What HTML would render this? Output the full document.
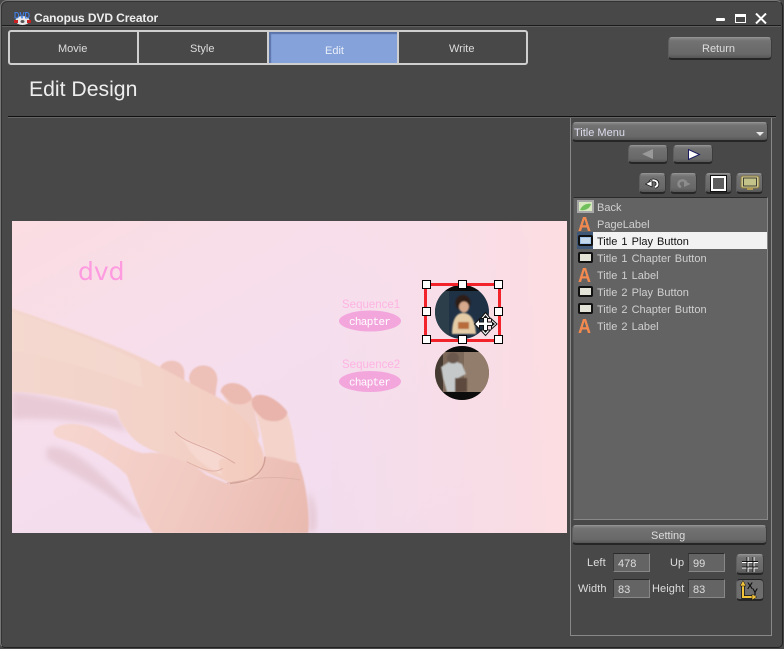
<!DOCTYPE html>
<html><head><meta charset="utf-8"><style>
html,body{margin:0;padding:0;background:#111}
#w{position:relative;width:784px;height:649px;overflow:hidden;background:#484848;font-family:"Liberation Sans",sans-serif;color:#ddd;font-size:11px}
.a{position:absolute}
.t{position:absolute;white-space:nowrap}
.btn{position:absolute;box-sizing:border-box;border-radius:4px;background:linear-gradient(#868686,#727272 15%,#686868 80%,#565656);border-top:1px solid #929292;border-bottom:2px solid #262626;border-left:1px solid #5e5e5e;border-right:1px solid #3c3c3c}
.row{position:absolute;left:597px;white-space:nowrap;font-size:11px;color:#d0d0d0;word-spacing:1px}
.inp{position:absolute;box-sizing:border-box;width:37px;height:19px;background:#646464;border-top:1px solid #2a2a2a;border-left:1px solid #3a3a3a;border-right:1px solid #888;border-bottom:1px solid #888;color:#ddd;font-size:11px;line-height:20px;padding-left:4px}
.lb{position:absolute;font-size:11px;color:#ddd;white-space:nowrap;letter-spacing:.1px}
</style></head><body><div id="w">
<div class="a" style="left:0;top:0;width:783px;height:648px;box-sizing:border-box;border-radius:7px 7px 5px 5px;background:#484848;border:1px solid #777;border-right-color:#222;border-bottom-color:#222;box-shadow:inset 1px 1px 0 #333"></div>
<div class="a" style="left:2px;top:25px;width:779px;height:1px;background:#1c1c1c"></div>
<div class="a" style="left:2px;top:26px;width:779px;height:1px;background:#5f5f5f"></div>

<svg class="a" style="left:14px;top:11px" width="17" height="14" viewBox="0 0 17 14">
<ellipse cx="8.500" cy="9.500" rx="7" ry="4.500" fill="#e8e8e8"/><rect x="0" y="9" width="4" height="3" fill="#c82020"/><rect x="13" y="9" width="4" height="3" fill="#c82020"/><ellipse cx="8.500" cy="10.500" rx="2" ry="1.500" fill="#555"/>
<text x="0" y="7.500" font-size="9" font-weight="bold" font-family="Liberation Sans" fill="#3f7fe8" textLength="16" lengthAdjust="spacingAndGlyphs">DVD</text></svg>
<div class="t" style="left:34px;top:11px;font-size:12px;font-weight:bold;color:#eee;letter-spacing:-.1px">Canopus DVD Creator</div>

<div class="a" style="left:716px;top:18px;width:9px;height:3px;background:#fff;border-radius:1px"></div>
<div class="a" style="left:735px;top:14px;width:11px;height:9px;box-sizing:border-box;border:1px solid #fff;border-top:3px solid #fff"></div>
<svg class="a" style="left:755px;top:13px" width="12" height="11" viewBox="0 0 12 11"><path d="M1 .5L11 10.500M11 .5L1 10.500" stroke="#fff" stroke-width="2"/></svg>

<div class="a" style="left:8px;top:30px;width:520px;height:35px;box-sizing:border-box;border:2px solid #cfcfcf;border-radius:3px;background:#484848"></div>
<div class="a" style="left:269px;top:32px;width:128px;height:31px;background:#85a2da;box-shadow:inset 2px 2px 1px #5a73a8"></div>
<div class="a" style="left:137px;top:32px;width:2px;height:31px;background:#cfcfcf"></div>
<div class="a" style="left:267px;top:32px;width:2px;height:31px;background:#cfcfcf"></div>
<div class="a" style="left:397px;top:32px;width:2px;height:31px;background:#cfcfcf"></div>
<div class="t" style="left:58px;top:43px;color:#ddd">Movie</div>
<div class="t" style="left:190px;top:43px;color:#ddd">Style</div>
<div class="t" style="left:325px;top:45px;color:#e8eef8">Edit</div>
<div class="t" style="left:449px;top:43px;color:#ddd">Write</div>

<div class="btn" style="left:668px;top:37px;width:104px;height:23px"></div>
<div class="t" style="left:702px;top:43px;color:#ddd">Return</div>

<div class="t" style="left:29px;top:78px;font-size:21.200px;color:#eee">Edit Design</div>
<div class="a" style="left:8px;top:116px;width:768px;height:1px;background:#111"></div>
<div class="a" style="left:8px;top:117px;width:768px;height:1px;background:#666"></div>

<svg class="a" style="left:12px;top:221px" width="555" height="312" viewBox="12 221 555 312">
<defs>
<linearGradient id="bg" x1="0" y1="0" x2="1" y2="1"><stop offset="0" stop-color="#fbdde2"/><stop offset=".45" stop-color="#f5deee"/><stop offset="1" stop-color="#f0dcee"/></linearGradient>
<linearGradient id="bg2" x1="0" y1="0" x2="1" y2="0"><stop offset=".55" stop-color="#fbdde2" stop-opacity="0"/><stop offset="1" stop-color="#fddde0" stop-opacity=".9"/></linearGradient>
<linearGradient id="armg" x1="0" y1="0" x2="1" y2="0"><stop offset="0" stop-color="#f3d6cd"/><stop offset=".55" stop-color="#f3d2c8"/><stop offset="1" stop-color="#f3cbbd"/></linearGradient>
<linearGradient id="palm" gradientUnits="userSpaceOnUse" x1="200" y1="640" x2="900" y2="950"><stop offset="0" stop-color="#f6d5cf"/><stop offset=".55" stop-color="#f1c9c1"/><stop offset="1" stop-color="#e9bab0"/></linearGradient>
<filter id="b1" x="-5%" y="-5%" width="110%" height="110%"><feGaussianBlur stdDeviation="2.500"/></filter>
<filter id="b3" x="-20%" y="-20%" width="140%" height="140%"><feGaussianBlur stdDeviation="8"/></filter>
<filter id="b0"><feGaussianBlur stdDeviation=".8"/></filter>
<clipPath id="c1"><circle cx="462" cy="312" r="27"/></clipPath>
<clipPath id="c2"><circle cx="462" cy="373" r="27"/></clipPath>
</defs>
<rect x="12" y="221" width="555" height="312" fill="url(#bg)"/>
<rect x="12" y="221" width="555" height="312" fill="url(#bg2)"/>
<g transform="translate(0 215) scale(.3333)">
<path d="M36 530C120 540 250 570 350 600L380 650C250 610 120 610 36 612Z" fill="#e4c6d0" opacity=".8" filter="url(#b3)"/>
<path d="M140 700C200 680 300 760 440 920L400 900C300 810 180 760 140 730Z" fill="#e4c6d0" opacity=".8" filter="url(#b3)"/>
<path d="M925 830C950 860 955 910 945 950L925 950Z" fill="#e4c6d0" opacity=".8" filter="url(#b3)"/>
<g filter="url(#b1)">
<path d="M478 460C490 428 548 428 553 470L553 515L490 490Z" fill="#eec3bb"/>
<path d="M567 490C572 438 652 438 652 495L645 550L575 520Z" fill="#edc0b8"/>
<path d="M662 530C668 492 740 495 757 550L778 660L770 690L700 590Z" fill="#f2cfc6"/>
<path d="M662 530C668 492 740 495 757 550C740 575 700 570 690 560Z" fill="#ebbab1"/>
<path d="M755 560C760 525 820 535 860 590C880 640 885 700 892 755L795 735C790 670 775 610 755 560Z" fill="#f4d3ca"/>
<path d="M755 560C760 525 820 535 862 590C860 620 820 625 790 612C770 595 755 580 755 560Z" fill="#e8b4ab"/>
<path d="M160 650C170 620 240 620 290 645C340 680 400 710 430 715C500 705 570 740 620 780L680 805C740 810 780 770 795 725C830 725 860 740 895 745C915 790 930 880 925 955L460 955C420 900 400 830 380 780C340 740 260 690 195 675C175 670 160 665 160 650Z" fill="url(#palm)"/>
<path d="M36 280C150 320 300 370 430 430C480 455 560 500 650 545C710 580 755 630 775 680C800 720 795 760 770 790C740 810 700 810 680 800L660 790C610 770 560 740 500 720C440 705 400 680 375 640C360 620 355 600 350 585C250 560 120 530 36 530Z" fill="url(#armg)"/>
<path d="M525 650C570 690 640 690 700 745C670 720 640 725 668 780C620 760 570 720 560 690Z" fill="#f6d8d0"/>
<path d="M36 290C150 330 300 380 420 440L430 520C300 470 150 420 36 410Z" fill="#f5dbd2" opacity=".5"/>
</g>
<g filter="url(#b0)" fill="none">
<path d="M525 650C560 690 620 690 705 745" stroke="#dba99f" stroke-width="3"/>
<path d="M795 725C795 760 770 800 690 805" stroke="#cf9f96" stroke-width="4"/>
<path d="M680 805C760 790 820 780 900 795" stroke="#dfb3a9" stroke-width="3"/>
<path d="M560 740C600 760 640 780 668 760" stroke="#e0b2a8" stroke-width="3"/>
</g>
</g>
<text x="78" y="280" font-family="DejaVu Sans" font-size="25" fill="#fd9ae0">dvd</text>
<text x="342" y="308" font-family="Liberation Sans" font-size="11.500" fill="#feb4e2">Sequence1</text>
<text x="342" y="368" font-family="Liberation Sans" font-size="11.500" fill="#feb4e2">Sequence2</text>
<ellipse cx="370" cy="321" rx="31" ry="10.500" fill="#f2a6dc"/>
<ellipse cx="370" cy="381.500" rx="31" ry="10.500" fill="#f2a6dc"/>
<text x="349" y="325" font-family="Liberation Mono" font-size="11" fill="#fff" textLength="42">chapter</text>
<text x="349" y="385.500" font-family="Liberation Mono" font-size="11" fill="#fff" textLength="42">chapter</text>
<g clip-path="url(#c1)">
<rect x="435" y="285" width="54" height="54" fill="#1f3145"/>
<rect x="435" y="285" width="54" height="6" fill="#0c0c0c"/>
<rect x="435" y="291" width="14" height="48" fill="#2c3e4a"/>
<g filter="url(#b0)">
<ellipse cx="463" cy="303" rx="7.500" ry="8" fill="#2e1d18"/>
<ellipse cx="464" cy="307" rx="5" ry="5.500" fill="#d6a88c"/>
<path d="M452 334C452 320 456 313 463 313C471 313 475 320 476 334Z" fill="#e3cca6"/>
<rect x="458" y="322" width="11" height="7" fill="#b86c3a"/>
</g>
</g>
<g clip-path="url(#c2)">
<rect x="435" y="346" width="54" height="54" fill="#7c6859"/>
<rect x="435" y="346" width="54" height="6" fill="#0c0c0c"/>
<rect x="464" y="352" width="25" height="40" fill="#927c6b"/>
<rect x="435" y="352" width="8" height="40" fill="#453a31"/>
<g filter="url(#b0)">
<path d="M441 367L452 360L462 364L466 374L458 378L462 392L447 392L443 378Z" fill="#c5c9c9"/>
<ellipse cx="453" cy="358" rx="6" ry="5.500" fill="#6b584d"/>
<rect x="455" y="378" width="12" height="14" fill="#5d4a3c"/>
</g>
<rect x="435" y="392" width="54" height="8" fill="#0c0c0c"/>
</g>
<rect x="425.500" y="284.500" width="74" height="56" fill="none" stroke="#f3232c" stroke-width="3"/>
<g fill="#fff" stroke="#000" stroke-width="1">
<rect x="422.500" y="280.500" width="8" height="8"/><rect x="458.500" y="280.500" width="8" height="8"/><rect x="494.500" y="280.500" width="8" height="8"/>
<rect x="422.500" y="307.500" width="8" height="8"/><rect x="494.500" y="307.500" width="8" height="8"/>
<rect x="422.500" y="335.500" width="8" height="8"/><rect x="458.500" y="335.500" width="8" height="8"/><rect x="494.500" y="335.500" width="8" height="8"/>
</g>
<path d="M485.500 312.500L490.500 318.500H487.500V322H491.500V319L497 324L491.500 329V325.500H487.500V330H490.500L485.500 335.500L480.500 330H483.500V325.500H479.500V329L474.500 324L479.500 319V322H483.500V318.500H480.500Z" fill="#fff" stroke="#111" stroke-width="1"/>
<path d="M485.500 315L488 318H483ZM485.500 333L488 330H483ZM495 324L492 321.500V326.500Z" fill="#111"/>
</svg>

<div class="a" style="left:570px;top:118px;width:202px;height:518px;box-sizing:border-box;border:1px solid #888;border-top:0;"></div>
<div class="btn" style="left:572px;top:122px;width:196px;height:20px"></div>
<div class="t" style="left:574px;top:127px;color:#dde">Title Menu</div>
<svg class="a" style="left:756px;top:132px" width="9" height="5"><path d="M0 0H8L4 4Z" fill="#e8e8e8"/></svg>

<div class="btn" style="left:628px;top:145px;width:40px;height:19px"></div>
<svg class="a" style="left:641px;top:149px" width="13" height="11"><path d="M12 0V10L1 5Z" fill="#999"/></svg>
<div class="btn" style="left:673px;top:145px;width:40px;height:19px"></div>
<svg class="a" style="left:688px;top:149px" width="13" height="12"><path d="M.5 .5V10.500L11.500 5.500Z" fill="#fff" stroke="#1a1a60"/></svg>

<div class="btn" style="left:639px;top:173px;width:27px;height:21px"></div>
<svg class="a" style="left:645px;top:176px" width="15" height="14" viewBox="0 0 15 14"><path d="M5 6.500C6 3.500 12.500 3.500 12.500 8C12.500 9.500 11.500 10.500 10 11" fill="none" stroke="#111" stroke-width="3.500"/><path d="M5 6.500C6 3.500 12.500 3.500 12.500 8C12.500 9.500 11.500 10.500 10 11" fill="none" stroke="#fff" stroke-width="2"/><path d="M.5 8L7 4.500V11Z" fill="#fff" stroke="#111" stroke-width=".7"/></svg>
<div class="btn" style="left:670px;top:173px;width:27px;height:21px"></div>
<svg class="a" style="left:676px;top:176px" width="15" height="14" viewBox="0 0 15 14"><path d="M10 6.500C9 3.500 2.500 3.500 2.500 8C2.500 9.500 3.500 10.500 5 11" fill="none" stroke="#8c8c8c" stroke-width="2.500"/><path d="M14.500 8L8 4.500V11Z" fill="#8c8c8c"/></svg>
<div class="btn" style="left:705px;top:173px;width:27px;height:21px"></div>
<div class="a" style="left:711px;top:176px;width:15px;height:15px;box-sizing:border-box;border:2px solid #fff;outline:1px solid #111;background:#5c5c5c"></div>
<div class="btn" style="left:736px;top:173px;width:27px;height:21px"></div>
<svg class="a" style="left:740px;top:175px" width="20" height="17" viewBox="0 0 20 17"><rect x="1" y="1" width="18" height="12" rx="2" fill="#cfc88f" stroke="#8a7a40"/><rect x="3.500" y="3" width="13" height="8" fill="#c3c389" stroke="#222" stroke-width=".8"/><rect x="7" y="13" width="6" height="2" fill="#b39c50"/></svg>

<div class="a" style="left:573px;top:197px;width:195px;height:323px;box-sizing:border-box;background:#636363;border:1px solid #888;border-top:1px solid #2a2a2a;border-left:1px solid #555"></div>
<div class="a" style="left:593px;top:232px;width:174px;height:17px;background:#f2f2f2"></div>
<div class="a" style="left:577px;top:232px;width:16px;height:17px;background:#3f5878"></div>

<svg class="a" style="left:577px;top:200px" width="17" height="14" viewBox="0 0 17 14"><rect x="0" y="0" width="17" height="13" fill="#a8a8a8"/><path d="M2 2H15V11H2Z" fill="#d8e8c0"/><path d="M3 10C5 5 10 3 14 4C13 8 9 11 3 10Z" fill="#6fbf5b"/></svg>
<svg class="a" style="left:578px;top:215px" width="14" height="18" viewBox="0 0 14 18"><text x="0" y="16" font-family="Liberation Sans" font-weight="bold" font-size="20" fill="#f28a50" textLength="13" lengthAdjust="spacingAndGlyphs">A</text></svg>
<svg class="a" style="left:578px;top:235px" width="15" height="11" viewBox="0 0 15 11"><rect x="1" y="1" width="13" height="9" rx="1" fill="#9fc3ea" stroke="#111" stroke-width="2"/><rect x="3" y="3" width="9" height="5" fill="#c6d8ec"/></svg>
<svg class="a" style="left:578px;top:252px" width="15" height="11" viewBox="0 0 15 11"><rect x="1" y="1" width="13" height="9" rx="1" fill="#e4e4d8" stroke="#111" stroke-width="2"/></svg>
<svg class="a" style="left:578px;top:266px" width="14" height="18" viewBox="0 0 14 18"><text x="0" y="16" font-family="Liberation Sans" font-weight="bold" font-size="20" fill="#f28a50" textLength="13" lengthAdjust="spacingAndGlyphs">A</text></svg>
<svg class="a" style="left:578px;top:286px" width="15" height="11" viewBox="0 0 15 11"><rect x="1" y="1" width="13" height="9" rx="1" fill="#e4e4d8" stroke="#111" stroke-width="2"/></svg>
<svg class="a" style="left:578px;top:303px" width="15" height="11" viewBox="0 0 15 11"><rect x="1" y="1" width="13" height="9" rx="1" fill="#e4e4d8" stroke="#111" stroke-width="2"/></svg>
<svg class="a" style="left:578px;top:317px" width="14" height="18" viewBox="0 0 14 18"><text x="0" y="16" font-family="Liberation Sans" font-weight="bold" font-size="20" fill="#f28a50" textLength="13" lengthAdjust="spacingAndGlyphs">A</text></svg>

<div class="row" style="top:202px">Back</div>
<div class="row" style="top:219px">PageLabel</div>
<div class="row" style="top:236px;color:#111">Title 1 Play Button</div>
<div class="row" style="top:253px">Title 1 Chapter Button</div>
<div class="row" style="top:270px">Title 1 Label</div>
<div class="row" style="top:287px">Title 2 Play Button</div>
<div class="row" style="top:304px">Title 2 Chapter Button</div>
<div class="row" style="top:321px">Title 2 Label</div>

<div class="btn" style="left:572px;top:525px;width:195px;height:20px"></div>
<div class="t" style="left:651px;top:530px;color:#ddd">Setting</div>

<div class="lb" style="left:587px;top:557px">Left</div>
<div class="inp" style="left:613px;top:553px">478</div>
<div class="lb" style="left:670px;top:557px">Up</div>
<div class="inp" style="left:688px;top:553px">99</div>
<div class="lb" style="left:578px;top:583px">Width</div>
<div class="inp" style="left:613px;top:579px">83</div>
<div class="lb" style="left:652px;top:583px">Height</div>
<div class="inp" style="left:688px;top:579px">83</div>

<div class="btn" style="left:736px;top:554px;width:28px;height:21px"></div>
<svg class="a" style="left:741px;top:556px" width="18" height="17" viewBox="0 0 18 17"><path d="M7 1V16M13 1V16M1 6.500H17M1 12H17" stroke="#fff" stroke-width="1"/><path d="M6 1V16M12 1V16M1 5.500H17M1 11H17" stroke="#111" stroke-width="1"/></svg>
<div class="btn" style="left:736px;top:579px;width:28px;height:22px;background:#6e6e6e;border-top-color:#222"></div>
<svg class="a" style="left:739px;top:580px" width="24" height="21" viewBox="0 0 24 21"><path d="M4 3V17H14" fill="none" stroke="#111" stroke-width="3.500"/><path d="M4 3V17H14" fill="none" stroke="#f3c33a" stroke-width="2"/><path d="M4 .5L1 6H7ZM18 17L13 14V20Z" fill="#f3c33a" stroke="#111" stroke-width=".5"/><text x="8" y="9" font-family="Liberation Sans" font-weight="bold" font-size="9" fill="#111">X</text><text x="13" y="15" font-family="Liberation Sans" font-weight="bold" font-size="9" fill="#111">Y</text></svg>
</div></body></html>
